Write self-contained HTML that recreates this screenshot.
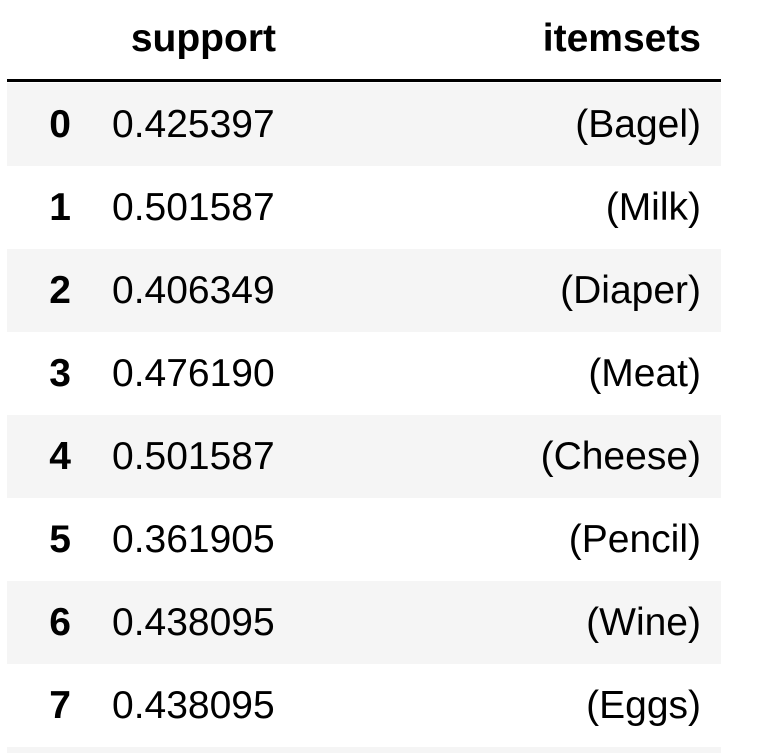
<!DOCTYPE html>
<html><head><style>
html,body{margin:0;width:773px;height:753px;overflow:hidden}
body{background:#fff;font-family:"Liberation Sans",Arial,sans-serif;color:#000;position:relative}
.t{position:absolute;font-size:39px;line-height:83px;height:83px;white-space:nowrap}
.row{position:absolute;left:7px;width:714px;height:83px}
.g{background:#f5f5f5}
.i{font-weight:bold;right:702px;text-align:right}
.s{left:112px}
.v{right:72px;text-align:right}
</style></head><body>
<div class="t" style="top:-3px;right:497px;font-weight:bold">support</div>
<div class="t" style="top:-3px;right:72px;font-weight:bold">itemsets</div>
<div style="position:absolute;left:7px;top:79px;width:714px;height:3px;background:#000"></div>

<div class="row g" style="top:83px"></div>
<div class="row g" style="top:249px"></div>
<div class="row g" style="top:415px"></div>
<div class="row g" style="top:581px"></div>
<div class="row g" style="top:747px;height:6px"></div>

<div class="t i" style="top:83px">0</div><div class="t s" style="top:83px">0.425397</div><div class="t v" style="top:83px">(Bagel)</div>
<div class="t i" style="top:166px">1</div><div class="t s" style="top:166px">0.501587</div><div class="t v" style="top:166px">(Milk)</div>
<div class="t i" style="top:249px">2</div><div class="t s" style="top:249px">0.406349</div><div class="t v" style="top:249px">(Diaper)</div>
<div class="t i" style="top:332px">3</div><div class="t s" style="top:332px">0.476190</div><div class="t v" style="top:332px">(Meat)</div>
<div class="t i" style="top:415px">4</div><div class="t s" style="top:415px">0.501587</div><div class="t v" style="top:415px">(Cheese)</div>
<div class="t i" style="top:498px">5</div><div class="t s" style="top:498px">0.361905</div><div class="t v" style="top:498px">(Pencil)</div>
<div class="t i" style="top:581px">6</div><div class="t s" style="top:581px">0.438095</div><div class="t v" style="top:581px">(Wine)</div>
<div class="t i" style="top:664px">7</div><div class="t s" style="top:664px">0.438095</div><div class="t v" style="top:664px">(Eggs)</div>
</body></html>
